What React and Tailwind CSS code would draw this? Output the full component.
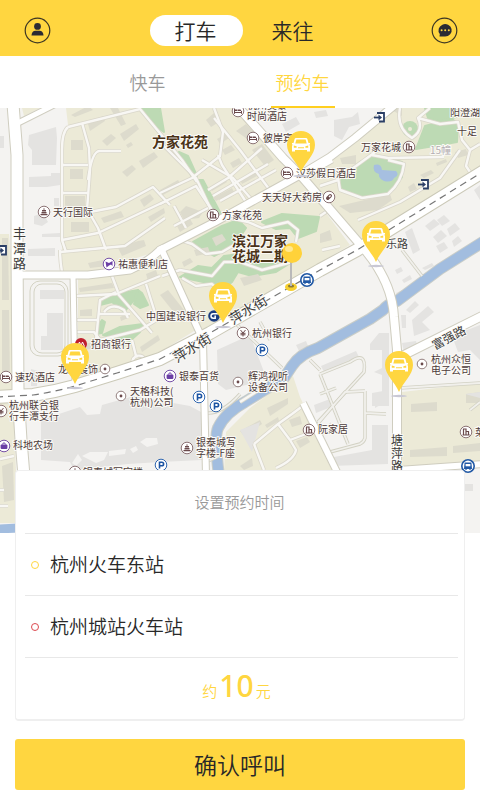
const tabs = ["打车", "来往"];

const stops = [
  { name: "杭州火车东站", ring: "border-[#ffd640]" },
  { name: "杭州城站火车站", ring: "border-[#dd4a50]" },
];

const cars = [
  [301, 131],
  [376, 221],
  [223, 282],
  [75, 343],
  [399, 351],
];

const beige = [
  "66,108 236,108 300,178 350,245 203,332 162,250 92,272 62,272 62,145 68,125",
  "303,180 340,155 396,108 480,108 480,167 360,245",
  "78,278 130,272 162,256 199,328 160,352 78,382",
  "0,234 9,234 12,275 13,390 0,392",
  "0,402 13,402 16,470 16,523 0,523",
  "22,108 40,108 24,116",
  "224,472 226,432 250,408 293,376 300,397 336,472",
  "402,392 480,383 480,462 402,466",
  "60,250 104,249 108,262 70,268",
];

const greens = [
  "140,108 160,108 164,132 158,128",
  "179,152 188,156 197,176 193,179",
  "197,180 203,180 222,216 212,212",
  "193,242 222,226 238,220 246,228 238,240 226,250 214,256 204,250",
  "262,222 282,214 319,217 316,231 298,238 290,228 276,229",
  "180,277 198,266 212,268 224,256 240,254 250,262 238,272 232,282 222,290 208,283",
  "238,272 252,264 292,262 276,272 252,276",
  "341,177 360,162 378,156 402,162 402,177 388,193 362,196 342,189",
  "425,126 452,119 458,124 457,142 440,145 416,149",
  "425,108 460,108 456,117 440,121 428,118",
  "100,305 110,295 138,290 134,300 124,312 112,302",
  "138,290 142,293 148,305 140,308 134,304",
  "103,335 120,327 143,324 140,332 130,341 110,337",
  "98,326 102,320 105,322 102,333 96,334",
];

const blocksBeige = [
  "71,115 88,106 93,110 75,117",
  "71,140 83,140 83,150 71,150",
  "70,169 83,169 83,179 70,179",
  "65,196 85,196 85,206 65,206",
  "71,222 89,222 89,232 71,232",
  "88,124 103,116 105,121 90,131",
  "102,141 111,134 116,138 107,146",
  "120,134 136,124 139,129 124,141",
  "110,108 118,108 126,124 121,126",
  "126,145 131,142 133,145 128,148",
  "122,172 132,165 136,169 127,177",
  "139,161 154,152 158,157 143,168",
  "101,218 121,211 124,217 104,223",
  "140,200 150,194 154,199 144,207",
  "148,217 164,208 165,213 151,222",
  "118,248 138,241 144,240 146,246 122,256",
  "160,190 178,180 181,185 163,195",
  "177,226 190,219 193,224 180,232",
  "180,212 186,206 203,212 199,218 184,220",
  "217,139 226,134 229,138 220,144",
  "222,150 231,145 235,150 225,155",
  "230,163 239,158 242,163 233,168",
  "209,188 225,179 227,182 212,191",
  "213,198 232,188 234,192 216,201",
  "240,180 256,172 257,176 242,184",
  "252,150 262,144 274,160 265,166",
  "236,131 246,124 254,132 250,141",
  "206,120 214,113 219,122 211,127",
  "79,288 112,283 114,288 80,292",
  "88,263 108,259 108,266 90,268",
  "80,310 92,309 92,316 80,316",
  "120,317 127,314 128,318 121,321",
  "140,347 158,335 160,340 142,352",
  "82,344 104,341 108,346 84,350",
  "146,274 156,270 158,276 148,281",
  "160,295 168,290 188,315 180,320",
  "182,262 190,258 193,262 184,267",
  "240,278 258,274 262,280 244,286",
  "194,250 208,247 210,253 196,256",
  "212,238 222,234 226,240 216,246",
  "340,158 356,155 356,164 342,164",
  "366,147 378,141 380,146 368,151",
  "420,175 431,170 434,173 424,178",
  "436,163 446,159 447,162 437,166",
  "339,206 390,194 392,200 378,210 350,213",
  "408,187 414,183 417,189 410,192",
  "320,234 330,230 332,240 320,243",
  "402,116 392,110 402,108",
  "455,152 466,149 468,155 458,158",
  "2,238 8,238 9,300 2,300",
  "2,310 9,310 10,380 2,380",
  "2,466 13,462 14,500 4,502",
  "267,408 288,398 288,404 270,416",
  "240,431 260,420 262,424 244,436",
  "240,466 252,458 253,466 244,470",
  "289,420 300,416 302,424 292,427",
  "296,441 307,437 310,442 300,448",
  "411,404 437,402 437,411 411,412",
  "466,394 480,392 480,403 466,403",
  "410,450 447,447 447,456 410,457",
  "453,446 480,443 480,451 453,453",
  "265,425 278,417 279,421 267,428",
];

const blocksGrey = [
  "29,135 56,127 57,138 56,165 32,165 32,150 28,145",
  "29,177 51,176 51,173 60,173 60,185 47,187 29,187",
  "0,136 4,136 4,148 0,148",
  "34,216 43,213 48,222 42,226 34,224",
  "42,234 60,233 60,237 42,237",
  "54,198 59,198 59,206 54,206",
  "28,249 55,248 55,256 28,256",
  "40,290 64,290 64,299 40,299",
  "47,313 63,313 63,350 41,350 41,336 47,336",
  "31,369 38,371 37,386 31,386",
  "282,124 296,117 300,124 286,132",
  "334,120 352,117 358,112 360,124 349,127 342,140 334,136",
  "314,112 326,110 328,116 316,118",
  "41,420 80,407 87,415 100,414 102,405 134,396 190,406 201,412 202,460 160,462 128,464 74,470 70,462 41,460",
  "217,350 250,335 264,372 250,384 226,390 218,384",
  "252,452 240,430 260,422",
  "296,345 306,341 308,346 299,351",
  "321,366 356,351 359,357 324,372",
  "370,344 379,333 389,333 389,400 375,408 375,393 382,393 382,375 374,372 382,368 382,350 370,350",
  "372,393 389,390 389,406 372,406",
  "372,425 388,425 388,464 330,466 334,457 372,450",
  "314,405 330,399 331,407 316,413",
  "396,293 418,283 420,287 398,297",
  "401,315 406,315 406,328 402,328",
  "406,310 415,301 419,305 410,313",
  "412,320 428,306 434,312 422,322 430,330 414,336",
  "402,343 416,341 418,348 404,352",
  "395,270 401,267 403,271 397,274",
  "402,280 410,275 412,279 404,283",
  "422,268 432,263 434,266 425,270",
  "425,226 434,219 440,224 430,231",
  "437,220 444,215 450,221 442,226",
  "433,237 441,230 447,236 438,243",
  "447,229 455,223 460,229 450,236",
  "436,246 444,242 448,248 440,253",
  "452,241 458,236 462,241 454,247",
  "405,232 412,228 420,250 413,254",
  "452,336 480,325 480,360 470,350 458,352",
  "465,484 473,484 473,491 465,491",
  "474,190 480,185 480,200",
  "465,394 480,392 480,398",
];

// narrow estate lanes
const lanes = [
  "M68 127L140 109L182 160L197 182",
  "M68 127Q62 132 62 150V240L66 252",
  "M82 123L89 148L90 170L87 210",
  "M62 165H88M62 193H88",
  "M88 180Q92 150 100 151H121",
  "M90 212L116 207L153 187L170 205",
  "M90 214L98 228L106 250",
  "M62 240L98 233L168 200",
  "M60 252L125 246L165 218",
  "M60 250Q60 260 62 272",
  "M160 193L192 178L220 156L223 132L214 108",
  "M214 118L240 150L275 197",
  "M202 160L233 178L252 200",
  "M218 155L222 165L248 205",
  "M213 196L268 164",
  "M208 190L228 178L262 148",
  "M220 201L276 170",
  "M160 142L196 178L212 212L220 224",
  "M160 204L196 186L212 210",
  "M174 206L186 228M174 226L208 208",
  "M221 216L248 222L262 228L288 222L298 230L296 242",
  "M180 240L192 244L206 254L222 252L236 244",
  "M162 276L180 270L212 276L224 262L240 262L262 270L292 262",
  "M182 278L196 286L212 284L222 294",
  "M76 296L116 294L160 276",
  "M96 340L100 300L116 292",
  "M118 292L112 276M118 294L152 333",
  "M104 312Q112 302 124 310L128 318M98 314H130",
  "M76 320H97M76 332H94L100 340L140 330L160 318",
  "M146 284L156 316M132 340L136 356Q144 354 146 362",
  "M132 366Q132 356 138 356",
  "M400 108Q396 128 412 138Q424 130 418 118L430 108",
  "M418 118L440 124L458 122L462 140L470 150L480 144",
  "M372 155L388 158L444 157",
  "M388 160L404 164Q402 182 388 194L362 198L340 190L338 178L356 166L378 150",
  "M320 186L338 180",
  "M358 220L400 202L440 178L460 150",
  "M470 150L466 166L470 172",
  "M320 216L332 208M322 250L340 246",
  "M254 444L278 424L292 414L304 405",
  "M254 444L264 470M278 424L290 440L296 450Q294 460 276 468",
  "M290 440L306 434M316 438L332 424",
  "M240 402L262 388",
  "M0 459L14 456M0 490H4M0 506H8",
];

const greyLanes = [
  "M318 422L364 372Q367 350 350 362L320 374",
  "M320 374L348 444",
  "M330 452L360 444Q364 442 365 438V391M365 413L386 414",
  "M316 426L345 392L365 391M320 394L336 388",
  "M400 388L480 383",
  "M230 318L282 368M260 322L270 340",
  "M402 250L422 276M470 410L480 402",
  "M207 413Q222 414 240 394",
  "M310 360L320 370M206 462L219 456",
];

const roads = [
  ["M13 104L17 155L17 250L18 392L21 440L24 476", 11],
  ["M18 123L56 104", 5],
  ["M20 275H88L130 270Q148 262 160 250L215 222L300 175L330 157L355 138L396 104", 7],
  ["M232 100L283 158L303 178L365 250Q392 282 394 317L397 350V476", 8],
  ["M73 275L75 385", 5],
  ["M160 246L197 327L203 340L206 476", 6],
  ["M400 357L484 315", 8],
  ["M398 470L484 464", 6],
  ["M303 403L339 476", 6],
  ["M300 178L332 160", 5],
];

const mainRoad = "M-4 397L33 395Q54 392 75 386L117 373L160 359L210 333L320 270L357 250L392 228L484 171";

const river =
  "M486 240L440 269L397 301Q388 304 383 310L370 319L318 348Q300 354 292 366L284 378L245 402Q225 413 218 428Q214 436 219 476";

const labels = [
  { x: 247, y: 120, t: "时尚酒店" },
  { x: 247, y: 109, t: "杭州莫泰" },
  { x: 263, y: 142, t: "彼岸宾馆" },
  { x: 296, y: 177, t: "汉莎假日酒店" },
  { x: 262, y: 201, t: "天天好大药房" },
  { x: 222, y: 219, t: "方家花苑" },
  { x: 361, y: 151, t: "万家花城" },
  { x: 450, y: 116, t: "阳澄湖" },
  { x: 457, y: 135, t: "十足" },
  { x: 53, y: 216, t: "天行国际" },
  { x: 118, y: 268, t: "祐惠便利店" },
  { x: 91, y: 348, t: "招商银行" },
  { x: 58, y: 373, t: "龙湖装饰" },
  { x: 15, y: 381, t: "速玖酒店" },
  { x: 130, y: 395, t: "天格科技(" },
  { x: 130, y: 406, t: "杭州)公司" },
  { x: 146, y: 320, t: "中国建设银行" },
  { x: 252, y: 337, t: "杭州银行" },
  { x: 179, y: 380, t: "银泰百货" },
  { x: 248, y: 380, t: "辉鸿视听" },
  { x: 248, y: 391, t: "设备公司" },
  { x: 431, y: 363, t: "杭州众恒" },
  { x: 431, y: 374, t: "电子公司" },
  { x: 9, y: 409, t: "杭州联合银" },
  { x: 9, y: 420, t: "行丰潭支行" },
  { x: 13, y: 449, t: "科地农场" },
  { x: 196, y: 446, t: "银泰城写" },
  { x: 196, y: 457, t: "字楼-F座" },
  { x: 83, y: 476, t: "银泰城写字楼" },
  { x: 318, y: 433, t: "阮家居" },
  { x: 475, y: 436, t: "菜" },
];

const pois = [
  ["bed", 238, 111],
  ["bed", 253, 138],
  ["bed", 287, 173],
  ["bed", 6, 377],
  ["home", 213, 215],
  ["home", 409, 147],
  ["home", 309, 430],
  ["home", 466, 432],
  ["tower", 44, 212],
  ["tower", 187, 448],
  ["tower", 75, 472],
  ["pill", 329, 197],
  ["yen", 243, 333],
  ["yen", 1, 411],
  ["shop", 109, 264],
  ["bag", 170, 376],
  ["bag", 4, 446],
  ["parking", 262, 350],
  ["parking", 199, 397],
  ["parking", 216, 406],
  ["parking", 161, 465],
  ["bus", 307, 280],
  ["bus", 468, 466],
  ["ccb", 214, 316],
  ["cmb", 81, 344],
  ["dot", 105, 369],
  ["dot", 121, 396],
  ["dot", 238, 382],
  ["dot", 422, 364],
  ["gate", 380, 117],
  ["gate", 424, 184],
  ["gate", 2, 250],
];

const BROWN = "#6b4a4c";

const Poi = ({ kind, x, y }) => {
  const ring = (color) => <circle r="5.8" fill="#fff" stroke={color} strokeWidth="1" />;
  return (
    <g transform={`translate(${x} ${y})`}>
      {kind === "bed" && (
        <>
          {ring("#8c7375")}
          <path d="M-3.5 -2.5V2.8M-3.5 1.5H3.5M3.5 2.8V0" stroke={BROWN} strokeWidth="1" fill="none" />
          <path d="M-3 -1.5H-1V0H-3ZM-.5 -1.5H2.5L3.5 0H-.5Z" fill={BROWN} />
        </>
      )}
      {kind === "home" && (
        <>
          {ring("#8c7375")}
          <path d="M-2.5 3V-3H0V3M0 -.5H2.5V3M-3.5 3H3.8" stroke={BROWN} strokeWidth="1.2" fill="none" />
        </>
      )}
      {kind === "tower" && (
        <>
          {ring("#8c7375")}
          <path d="M0 -4L1 -2.5H-1ZM-2 -2H2V-.5H-2ZM-2.5 0H2.5V1.5H-2.5ZM-3.5 2H3.5V3.2H-3.5Z" fill={BROWN} />
        </>
      )}
      {kind === "pill" && (
        <>
          {ring("#8c7375")}
          <rect x="-3.5" y="-1.7" width="7" height="3.4" rx="1.7" fill={BROWN} transform="rotate(-45)" />
          <path d="M0 0L1.6 -1.6" stroke="#fff" strokeWidth="1.4" />
        </>
      )}
      {kind === "yen" && (
        <>
          {ring("#8c7375")}
          <path d="M-2.5 -3L0 0L2.5 -3M0 0V3.5M-2.5 .3H2.5M-2.5 1.8H2.5" stroke={BROWN} fill="none" />
        </>
      )}
      {kind === "shop" && (
        <>
          {ring("#7650a8")}
          <path d="M-3.5 -2.5L0 -1L3.5 -3V2L2 .5L0 1.5L-2.5 3.5Z" fill="#6b3fa5" />
        </>
      )}
      {kind === "bag" && (
        <>
          {ring("#7650a8")}
          <rect x="-3.4" y="-1.5" width="6.8" height="4.6" rx="1" fill="#6b3fa5" />
          <path d="M-1.7 -1.5Q0 -5 1.7 -1.5" stroke="#6b3fa5" fill="none" />
        </>
      )}
      {kind === "parking" && (
        <>
          {ring("#2f66b0")}
          <path d="M-1.5 3.5V-2.8H.8A1.8 1.8 0 0 1 .8 .8H-1.5" stroke="#1c54a3" strokeWidth="1.6" fill="none" />
        </>
      )}
      {kind === "bus" && (
        <>
          <circle r="6.2" fill="#fff" stroke="#2058a5" strokeWidth="1.6" />
          <path d="M-3.4 -3.4H3.4L4 3H2.6V4H1.4V3H-1.4V4H-2.6V3H-4Z" fill="#2058a5" />
          <path d="M-2.4 -2H2.4V.3H-2.4Z" fill="#fff" />
        </>
      )}
      {kind === "ccb" && (
        <>
          <circle r="5.8" fill="#1d3d80" />
          <path d="M4 -2.2H-.8A2.2 2.2 0 0 0 -.8 2.2H1.2V-.5" stroke="#fff" strokeWidth="1.5" fill="none" />
        </>
      )}
      {kind === "cmb" && (
        <>
          <circle r="6" fill="#c0202d" />
          <path d="M-3.5 2.5L-1.5 -2L0 2L1.5 -2L3.5 2.5" stroke="#fff" fill="none" />
        </>
      )}
      {kind === "dot" && (
        <>
          <circle r="4.8" fill="#fff" stroke="#94807f" />
          <circle r="1.4" fill={BROWN} />
        </>
      )}
      {kind === "gate" && (
        <>
          <path d="M-3 -4H4V4.5H-1" stroke="#2b3f66" strokeWidth="1.8" fill="#fff" />
          <path d="M-6 .5H0" stroke="#2b3f66" strokeWidth="1.8" />
          <path d="M-1.5 -2.5L2 .5L-1.5 3.5Z" fill="#2b3f66" />
        </>
      )}
    </g>
  );
};

const CarPin = ({ x, y }) => (
  <g transform={`translate(${x} ${y})`}>
    <ellipse cx="0" cy="45" rx="8" ry="1.2" fill="#c9c8d4" />
    <path d="M0 41C-4 31 -14 24 -14 14A14 14 0 0 1 14 14C14 24 4 31 0 41Z" fill="#ffd640" />
    <path
      fill="#fff"
      fillRule="evenodd"
      d="M-5 7H5Q6 7 6.4 8L7.5 12H9V13.4H8.2L9 15V20.5H6V19H-6V20.5H-9V15L-8.2 13.4H-9V12H-7.5L-6.4 8Q-6 7 -5 7ZM-4.6 8.6L-5.7 12.5H5.7L4.6 8.6ZM-7.2 14.6V16.8H-4.4V15.2ZM7.2 14.6V16.8H4.4V15.2ZM-3 16.2V17.2H3V16.2Z"
    />
  </g>
);

const CityMap = () => (
  <svg
    className="block w-full h-[425px] bg-[#f4f3f1] font-normal"
    viewBox="0 108 480 425"
    preserveAspectRatio="xMidYMid slice"
    role="img"
    aria-label="附近车辆地图"
  >
    {beige.map((p) => (
      <polygon key={p} points={p} fill="#ecead7" />
    ))}
    {greens.map((p) => (
      <polygon key={p} points={p} fill="#bddab4" stroke="#bddab4" strokeWidth="2" strokeLinejoin="round" />
    ))}
    <circle cx="410" cy="129" r="8" fill="#bddab4" />
    <circle cx="410" cy="129" r="2" fill="#ecead7" />
    <path
      d="M374 165Q381 163 382 170L396 171Q400 175 394 178Q392 183 384 181Q378 178 379 174Q372 172 374 165Z"
      fill="#a6bfe0"
    />
    {blocksBeige.map((p) => (
      <polygon key={p} points={p} fill="#dddbcd" />
    ))}
    {blocksGrey.map((p) => (
      <polygon key={p} points={p} fill="#e4e3e1" />
    ))}
    {/* mall courtyard */}
    <path
      d="M72 463L78 454L82 460L76 466ZM82 456L90 452L108 452L104 460L96 463L88 459ZM109 451L126 449L125 454L109 456ZM130 449L136 446L138 450L133 453ZM140 442L146 438L157 438L158 444L147 447Z"
      fill="#f4f3f1"
    />

    {/* running track */}
    <rect x="30" y="281" width="38" height="75" rx="10" fill="none" stroke="#d4d3c4" strokeWidth="1" />
    <rect x="34" y="284" width="31" height="69" rx="8" fill="none" stroke="#d4d3c4" strokeWidth="1" />

    {/* river */}
    <g fill="none" stroke="#a2bddf" strokeLinejoin="round">
      <path d={river} stroke="#c9cdc8" strokeWidth="12" />
      <path d={river} strokeWidth="10" />
      <path d="M-2 529L18 528" strokeWidth="9" />
    </g>

    <g fill="none" strokeLinejoin="round">
      {lanes.map((d) => (
        <path key={d} d={d} stroke="#dad7cb" strokeWidth="4" />
      ))}
      {lanes.map((d) => (
        <path key={d} d={d} stroke="#f8f7f4" strokeWidth="2.4" />
      ))}
      {greyLanes.map((d) => (
        <path key={d} d={d} stroke="#d2d1c3" strokeWidth="3.4" />
      ))}
      {greyLanes.map((d) => (
        <path key={d} d={d} stroke="#f1f0ec" strokeWidth="1.8" />
      ))}
      <path d={mainRoad} stroke="#cbc9b8" strokeWidth="14" />
      {roads.map(([d, w]) => (
        <path key={d} d={d} stroke="#cfcdbf" strokeWidth={w + 2} />
      ))}
      {roads.map(([d, w]) => (
        <path key={d} d={d} stroke="#fff" strokeWidth={w} />
      ))}
      <path d={mainRoad} stroke="#fff" strokeWidth="12" />
      <path d={mainRoad} stroke="#777" strokeWidth="1.2" strokeDasharray="7 5" />
    </g>

    {pois.map(([kind, x, y]) => (
      <Poi key={`${x}-${y}`} kind={kind} x={x} y={y} />
    ))}

    <g fill="#4d3b3a" stroke="#fbfaf6" strokeWidth="2" strokeLinejoin="round" paintOrder="stroke" fontSize="10">
      {labels.map((l) => (
        <text key={l.t + l.y} x={l.x} y={l.y}>
          {l.t}
        </text>
      ))}
      <text x="430" y="154" fill="#b3aeb2">
        15幢
      </text>
      <g fontSize="14" fontWeight="bold" fill="#4a3318">
        <text x="152" y="147">
          方家花苑
        </text>
        <text x="232" y="246">
          滨江万家
        </text>
        <text x="232" y="261">
          花城二期
        </text>
      </g>
      <g fontSize="13" fill="#3c3c3c">
        <text x="13" y="238">
          丰
        </text>
        <text x="13" y="253">
          潭
        </text>
        <text x="13" y="268">
          路
        </text>
        <text x="177" y="363" transform="rotate(-32 177 363)" fontSize="14">
          萍水街
        </text>
        <text x="233" y="325" transform="rotate(-32 233 325)" fontSize="14">
          萍水街
        </text>
        <text x="435" y="350" transform="rotate(-28 435 350)" fontSize="12">
          富强路
        </text>
        <text x="386" y="248" fontSize="11">
          乐路
        </text>
        <text x="391" y="445" fontSize="12">
          塘
        </text>
        <text x="391" y="458" fontSize="12">
          萍
        </text>
        <text x="391" y="471" fontSize="12">
          路
        </text>
      </g>
    </g>

    {/* current position */}
    <ellipse cx="291" cy="287" rx="6" ry="4" fill="#f6d02f" />
    <ellipse cx="291" cy="286" rx="3" ry="1.5" fill="#8b7a38" />
    <path d="M291 260V286" stroke="#b9b9b9" strokeWidth="2" />
    <circle cx="292" cy="253" r="10" fill="#ffd23a" />
    <ellipse cx="289" cy="249" rx="4" ry="3" fill="#ffe890" />

    {cars.map(([x, y]) => (
      <CarPin key={x} x={x} y={y} />
    ))}
  </svg>
);

const App = () => {
  return (
    <div className="min-h-screen bg-white font-['Noto_Sans_CJK_SC',sans-serif] font-[350] text-[#282828]">
      {/* Header */}
      <header className="flex items-center justify-between h-14 pt-1 pl-6 pr-[22px] bg-[#ffd640]">
        <button type="button" aria-label="我的">
          <svg className="block" width="27" height="27" viewBox="0 0 27 27">
            <circle cx="13.5" cy="13.5" r="12.3" fill="none" stroke="#3c3623" strokeWidth="1.2" />
            <circle cx="13.5" cy="9.4" r="3.4" fill="#2b2b33" />
            <path d="M7.5 18.5Q7.8 13.7 11.5 13.7H15.5Q19.2 13.7 19.5 18.5Z" fill="#2b2b33" />
          </svg>
        </button>
        <div className="flex gap-1 pl-2">
          {tabs.map((tab, i) => (
            <button
              key={tab}
              type="button"
              className={`w-[93px] h-[31px] pr-[2px] pb-[1px] rounded-full text-[21px] leading-[30px] ${i === 0 ? "bg-white" : ""}`}
            >
              {tab}
            </button>
          ))}
        </div>
        <button type="button" aria-label="消息">
          <svg className="block" width="27" height="27" viewBox="0 0 27 27">
            <circle cx="13.5" cy="13.5" r="12.3" fill="none" stroke="#3c3623" strokeWidth="1.2" />
            <path d="M8.5 19.5L8.8 17A6.6 6.2 0 1 1 14 19.5Z" fill="#2b2b33" />
            <circle cx="10.6" cy="13.3" r="1" fill="#ffd640" />
            <circle cx="14.2" cy="13.3" r="1" fill="#ffd640" />
            <circle cx="17.8" cy="13.3" r="1" fill="#ffd640" />
          </svg>
        </button>
      </header>

      {/* Car type */}
      <nav className="flex justify-center gap-[91px] h-[52px] pr-[30px] text-lg">
        <button type="button" className="w-16 text-[#999]">
          快车
        </button>
        <button type="button" className="w-16 pt-[2px] border-b-2 border-[#ffcf1f] text-[#ffd640]">
          预约车
        </button>
      </nav>

      <CityMap />

      {/* Booking */}
      <main className="relative -mt-[63px] px-[15px] pb-[10px]">
        <section className="pl-[9px] pr-[6px] bg-white border border-[#efefef] border-b-2 rounded">
          <button type="button" className="block w-full h-[63px] pr-1 border-b border-[#e8e8e8] text-[15px] text-[#999]">
            设置预约时间
          </button>
          {stops.map((stop) => (
            <button
              key={stop.name}
              type="button"
              className="flex items-center w-full h-[62px] pl-[6px] gap-[11px] border-b border-[#e8e8e8] text-[19px]"
            >
              <span className={`w-2 h-2 rounded-full border ${stop.ring}`}></span>
              {stop.name}
            </button>
          ))}
          <p className="flex items-baseline justify-center gap-[2px] h-[61px] pr-[10px] text-[15px] leading-[56px] text-[#ffd640]">
            约<span className="font-['Noto_Sans',sans-serif] text-[30px] font-medium">10</span>元
          </p>
        </section>
        <button type="button" className="block w-full h-[51px] mt-[18px] rounded-[3px] bg-[#ffd640] text-[23px]">
          确认呼叫
        </button>
      </main>
    </div>
  );
};

export default App;
